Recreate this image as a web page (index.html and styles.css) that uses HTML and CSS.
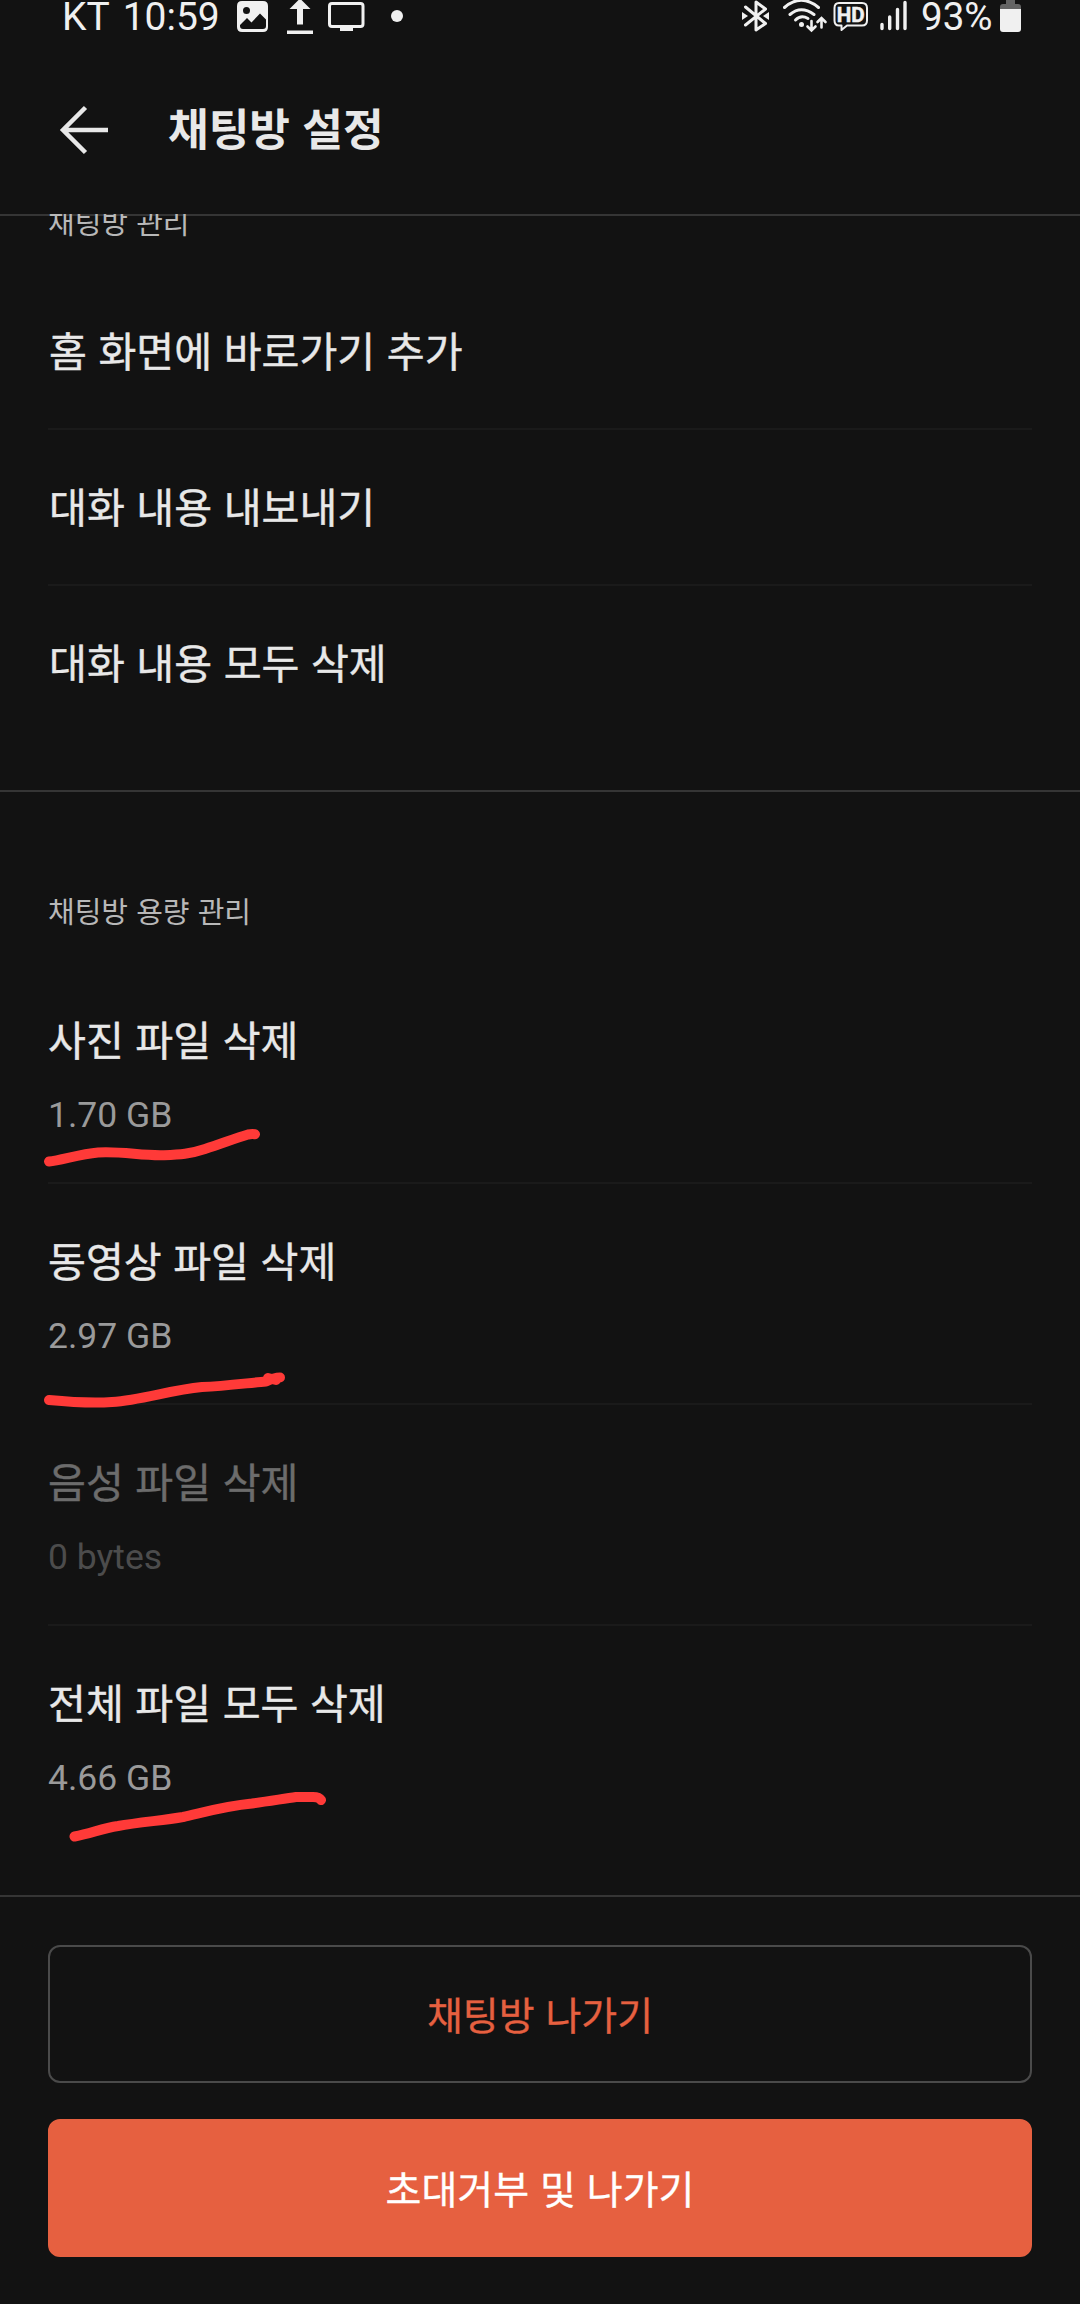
FILE: index.html
```html
<!DOCTYPE html>
<html lang="ko">
<head>
<meta charset="utf-8">
<title>채팅방 설정</title>
<link rel="stylesheet" href="styles.css">
</head>
<body>
<div class="screen">
  <div class="status">
    <span class="clock">KT 10:59</span>
    <svg class="ic-image" width="32" height="34" viewBox="0 0 32 34"><path fill="#f0f0f0" fill-rule="evenodd" d="M5 1H26Q31 1 31 6V27Q31 32 26 32H5Q0 32 0 27V6Q0 1 5 1ZM3 26Q3 29 6 29H26Q29 29 29 26V19.500L23 13.500L14.500 22.500L10 18L3 25ZM9.500 7A3.500 3.500 0 1 0 9.500 14A3.500 3.500 0 1 0 9.500 7Z"/></svg>
    <svg class="ic-upload" width="26" height="35" viewBox="0 0 26 35"><path fill="#f0f0f0" d="M13-1.500L23.500 9H16V24.500H10V9H2.500ZM0 30.500H26V34H0Z"/></svg>
    <svg class="ic-monitor" width="37" height="34" viewBox="0 0 37 34"><rect x="1.500" y="3.500" width="33.500" height="23" rx="2.500" fill="none" stroke="#f0f0f0" stroke-width="3"/><path fill="#f0f0f0" d="M12 27H25V31H12Z"/></svg>
    <span class="dot"></span>
    <svg class="ic-bt" width="28" height="34" viewBox="0 0 28 34"><g fill="none" stroke="#f0f0f0" stroke-width="3" stroke-linejoin="round" stroke-linecap="round"><path d="M3.500 7L23.500 23.500L14 30V2L23.500 9L3.500 25"/></g><path fill="#f0f0f0" d="M0 12L6 16L0 20ZM27 12L21 16L27 20Z"/></svg>
    <svg class="ic-wifi" width="45" height="34" viewBox="0 0 45 34"><g fill="none" stroke="#f0f0f0" stroke-width="3" stroke-linecap="round"><path d="M1.500 7.500Q18-7 35.500 7.500M7 14.500Q18 5 31 14.500"/><path d="M12.500 20Q18 14.500 25 18.500"/><path stroke-width="2.600" d="M28.500 21V30M24.500 26.500L28.500 30.500L32.500 26.500M38.500 27.500V19M34.500 22L38.500 18L42.500 22"/></g><circle cx="18.500" cy="24.500" r="2.500" fill="#f0f0f0"/></svg>
    <svg class="ic-hd" width="36" height="34" viewBox="0 0 36 34"><path fill="none" stroke="#f0f0f0" stroke-width="2" stroke-linejoin="round" d="M6 3H29Q34 3 34 8V20.500Q34 25.500 29 25.500H14L8.500 30V25.500H6Q1.500 25.500 1.500 20.500V8Q1.500 3 6 3Z"/><text class="hd-text" x="17.800" y="21.800" text-anchor="middle" textLength="28" lengthAdjust="spacingAndGlyphs">HD</text></svg>
    <svg class="ic-signal" width="28" height="34" viewBox="0 0 28 34"><path fill="none" stroke="#f0f0f0" stroke-width="3.400" stroke-linecap="round" d="M2 24.500V28.500M9.700 17V28.500M17.500 9.500V28.500M25 2.500V28.500"/></svg>
    <span class="percent">93%</span>
    <svg class="ic-battery" width="22" height="34" viewBox="0 0 22 34"><path fill="#646464" d="M6 0H15V4H18Q21 4 21 7V10H0V7Q0 4 3 4H6Z"/><path fill="#f0f0f0" d="M0 9H21V29Q21 32 18 32H3Q0 32 0 29Z"/></svg>
  </div>

  <header class="header">
    <svg class="back" width="50" height="50" viewBox="0 0 50 50"><path fill="none" stroke="#e8e8e8" stroke-width="4.500" d="M49 25H4M26.500 2.500L4 25L26.500 47.500"/></svg>
    <h1 class="title">채팅방 설정</h1>
  </header>

  <main class="content">
    <section class="section section-first">
      <h2 class="label">채팅방 관리</h2>
      <div class="row">홈 화면에 바로가기 추가</div>
      <div class="row">대화 내용 내보내기</div>
      <div class="row">대화 내용 모두 삭제</div>
    </section>
    <section class="section">
      <h2 class="label">채팅방 용량 관리</h2>
      <div class="row row-size"><span>사진 파일 삭제</span><span class="size">1.70 GB</span></div>
      <div class="row row-size"><span>동영상 파일 삭제</span><span class="size">2.97 GB</span></div>
      <div class="row row-size disabled"><span>음성 파일 삭제</span><span class="size">0 bytes</span></div>
      <div class="row row-size"><span>전체 파일 모두 삭제</span><span class="size">4.66 GB</span></div>
    </section>
    <div class="actions">
      <button class="btn btn-outline">채팅방 나가기</button>
      <button class="btn btn-fill">초대거부 및 나가기</button>
    </div>
  </main>

  <svg class="marks" width="1080" height="2304" viewBox="0 0 1080 2304">
    <path d="M49 1161.500C62 1160 80 1154 98 1152.500C122 1151 142 1156 164 1155.200C180 1154.600 190 1154 205 1149C222 1143.500 236 1138 248 1134.500Q252 1133.800 255 1134.300"/>
    <path d="M49 1400C70 1402 90 1403.500 112 1402C142 1400 170 1390 202 1387C225 1386 248 1383 266 1381.500Q274 1377.500 280 1377.500M268 1378L276 1380"/>
    <path d="M74.500 1836.500C92 1833 102 1828.500 118 1826C140 1822 163 1820.500 183 1817C205 1812 225 1806 252 1803.500C270 1801 285 1798.500 296 1797L313 1797Q319 1797 321 1800"/>
  </svg>
</div>
</body>
</html>
```
FILE: styles.css
```css
* { box-sizing: border-box; }

body {
  margin: 0;
  background: #121212;
  color: #e8e8e8;
  font-family: "Noto Sans CJK KR", sans-serif;
}

.screen {
  position: relative;
  width: 1080px;
  height: 2304px;
  overflow: hidden;
  display: flex;
  flex-direction: column;
}

.status {
  flex: none;
  display: flex;
  align-items: flex-start;
  height: 44px;
  padding-left: 62px;
  font-family: Roboto, sans-serif;
  font-size: 39px;
  line-height: 34px;
  color: #f0f0f0;
  white-space: nowrap;
}
.status svg { flex: none; }
.clock { width: 175px; word-spacing: 4px; }
.ic-upload { margin-left: 18px; }
.ic-monitor { margin-left: 15px; }
.dot { width: 12px; height: 12px; margin: 10px 0 0 26px; border-radius: 50%; background: #f0f0f0; }
.ic-bt { margin-left: 339px; }
.ic-wifi { margin-left: 13px; }
.ic-hd { margin-left: 5px; }
.hd-text { font: bold 21px Roboto, sans-serif; fill: #f0f0f0; stroke: #f0f0f0; stroke-width: 0.5px; }
.ic-signal { margin-left: 11px; }
.percent { width: 79px; margin-left: 13px; font-size: 38.5px; }

.header {
  flex: none;
  display: flex;
  align-items: flex-start;
  height: 170px;
  padding: 61px 0 0 59px;
}
.title { margin: -8px 0 0 59px; font-size: 44.2px; font-weight: 700; line-height: 60px; }

.content {
  flex: 1;
  overflow: hidden;
  box-shadow: inset 0 2px #353535;
}

.section { padding: 98px 0 48px; border-bottom: 2px solid #353535; }
.section-first { margin-top: -111px; }

.label {
  margin: 0 48px 33px;
  font-size: 29px;
  font-weight: 400;
  line-height: 40px;
  color: #b8b8b8;
}

.row {
  display: flex;
  flex-direction: column;
  justify-content: center;
  height: 156px;
  margin: 0 48px;
  padding: 0 0 4px 1px;
  border-bottom: 2px solid #1a1a1a;
  font-size: 41.2px;
  font-weight: 400;
  line-height: 60px;
  -webkit-text-stroke: 0.4px currentColor;
}
.row:last-child { border-bottom-color: transparent; }
.row-size { height: 221px; justify-content: flex-start; padding: 45px 0 0; }
.size { margin-top: 25px; font: 400 35.5px/44px Roboto, sans-serif; color: #9a9a9a; -webkit-text-stroke: 0; }
.disabled { color: #6c6c6c; }
.disabled .size { color: #4c4c4c; }

.actions { display: flex; flex-direction: column; gap: 36px; padding: 48px; }
.btn {
  height: 138px;
  padding: 0 0 3px;
  border: 2px solid #4a4a4a;
  border-radius: 12px;
  background: transparent;
  font: 400 39px/56px "Noto Sans CJK KR", sans-serif;
  -webkit-text-stroke: 0.3px currentColor;
}
.btn-outline { color: #e66040; }
.btn-fill { border-color: #e66040; background: #e66040; color: #fff; }

.marks { position: absolute; left: 0; top: 0; fill: none; stroke: #ff3a38; stroke-width: 10; stroke-linecap: round; stroke-linejoin: round; }
```
